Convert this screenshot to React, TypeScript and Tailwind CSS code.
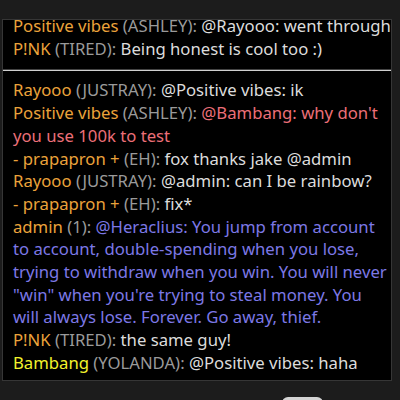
const NAME = "text-[#eba33b]";
const TAG = "text-[#9a9a9a]";
const MSG = "text-[#dcdcdc]";

type Line = { name: string; nameColor?: string; tag: string; msg: string[]; msgColor?: string };

const before: Line[] = [
  { name: "Positive vibes", tag: "(ASHLEY)", msg: ["@Rayooo: went through"] },
  { name: "P!NK", tag: "(TIRED)", msg: ["Being honest is cool too :)"] },
];

const after: Line[] = [
  { name: "Rayooo", tag: "(JUSTRAY)", msg: ["@Positive vibes: ik"] },
  { name: "Positive vibes", tag: "(ASHLEY)", msg: ["@Bambang: why don't", "you use 100k to test"], msgColor: "text-[#ec6f78]" },
  { name: "- prapapron +", tag: "(EH)", msg: ["fox thanks jake @admin"] },
  { name: "Rayooo", tag: "(JUSTRAY)", msg: ["@admin: can I be rainbow?"] },
  { name: "- prapapron +", tag: "(EH)", msg: ["fix*"] },
  {
    name: "admin",
    tag: "(1)",
    msg: [
      "@Heraclius: You jump from account",
      "to account, double-spending when you lose,",
      "trying to withdraw when you win. You will never",
      "\"win\" when you're trying to steal money. You",
      "will always lose. Forever. Go away, thief.",
    ],
    msgColor: "text-[#7c78e6]",
  },
  { name: "P!NK", tag: "(TIRED)", msg: ["the same guy!"] },
  { name: "Bambang", nameColor: "text-[#f3f32c]", tag: "(YOLANDA)", msg: ["@Positive vibes: haha"] },
];

function ChatLine({ l }: { l: Line }) {
  return (
    <div className="whitespace-nowrap">
      <span className={l.nameColor ?? NAME}>{l.name}</span>{" "}
      <span className={TAG}>{l.tag}:</span>{" "}
      <span className={l.msgColor ?? MSG}>
        {l.msg.map((m, i) => (
          <span key={i}>
            {i > 0 && <br />}
            {m}
          </span>
        ))}
      </span>
    </div>
  );
}

export default function App() {
  return (
    <div className="w-[400px] h-[400px] bg-[#1c1c1c] overflow-hidden relative" style={{ fontFamily: '"Noto Sans", sans-serif' }}>
      <div className="h-[19px]" />
      <div className="ml-[2px] w-[390px] h-[362px] border border-[#363636] bg-black overflow-hidden">
        <div className="-mt-[5px] pl-[10px] pr-[1px] text-[16.7px] leading-[22.7px]">
          {before.map((l, i) => (
            <ChatLine key={i} l={l} />
          ))}
          <div className="-ml-[10px] -mr-[1px] mt-[9px] mb-[8px] border-t border-[#444] border-b border-b-[#d0d0d0]" />
          {after.map((l, i) => (
            <ChatLine key={i} l={l} />
          ))}
        </div>
      </div>
      <div className="absolute left-[282px] top-[397px] w-[41px] h-[10px] rounded-t-[6px] bg-[#d4d4d4]" />
    </div>
  );
}
